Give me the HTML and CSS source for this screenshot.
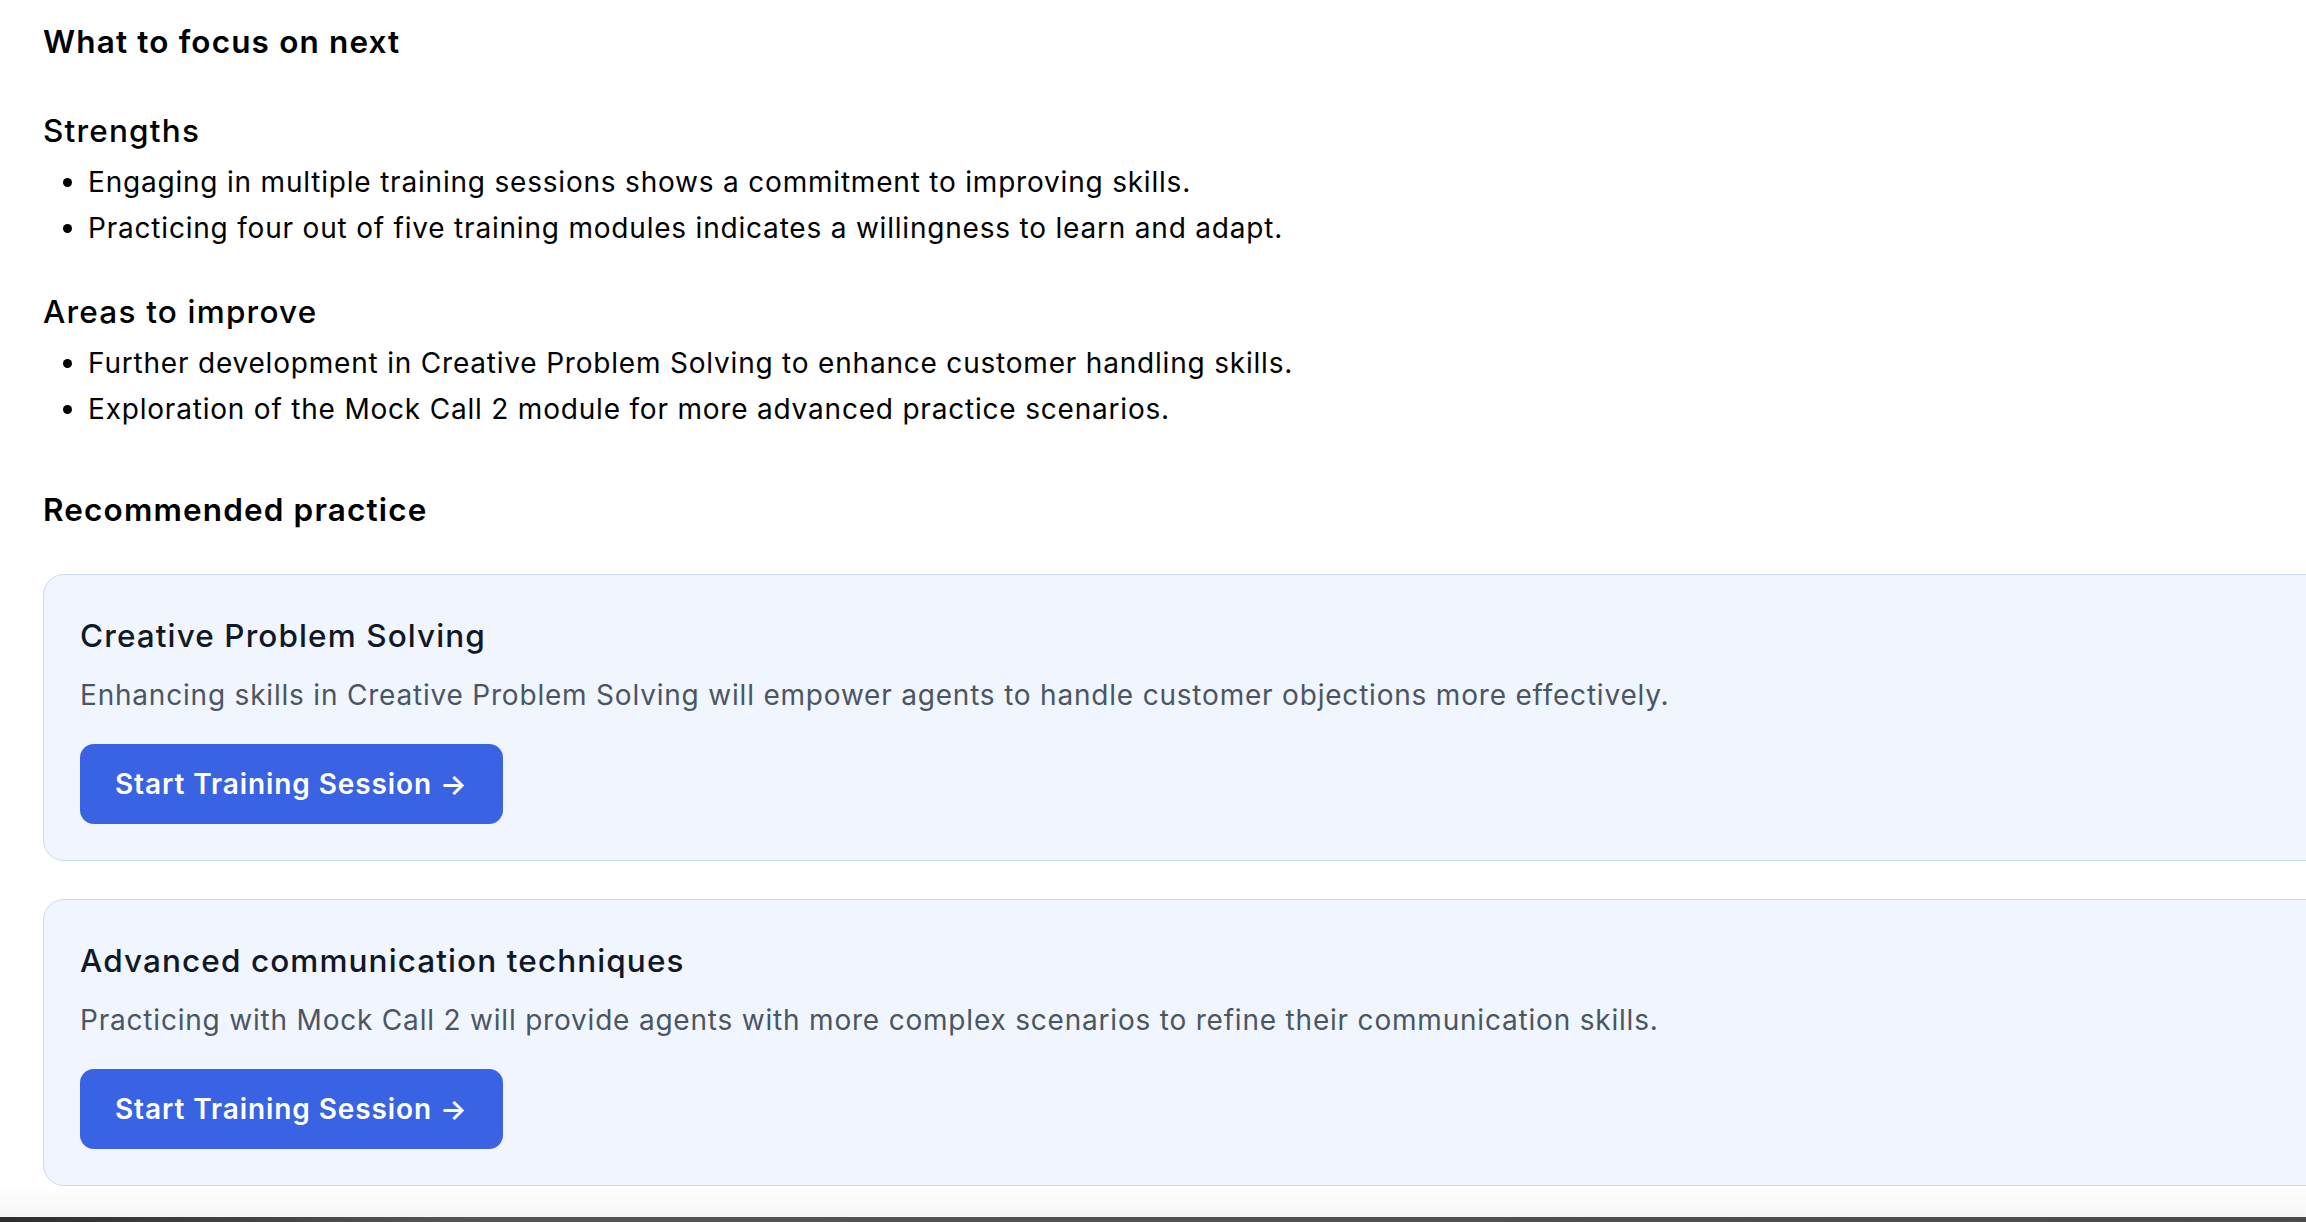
FILE: index.html
```html
<!DOCTYPE html>
<html lang="en">
<head>
    <meta charset="UTF-8" />
    <meta name="viewport" content="width=device-width, initial-scale=1.0" />
    <title>Training Summary</title>
    <link rel="stylesheet" href="styles.css">
</head>
<body>
    <main class="page">
        <!-- FOCUS AREAS -->
        <section class="focus">
            <h2 class="section-title">What to focus on next</h2>

            <div class="group">
                <h3>Strengths</h3>
                <ul>
                    <li>Engaging in multiple training sessions shows a commitment to improving skills.</li>
                    <li>Practicing four out of five training modules indicates a willingness to learn and adapt.</li>
                </ul>
            </div>

            <div class="group">
                <h3>Areas to improve</h3>
                <ul>
                    <li>Further development in Creative Problem Solving to enhance customer handling skills.</li>
                    <li>Exploration of the Mock Call 2 module for more advanced practice scenarios.</li>
                </ul>
            </div>
        </section>

        <!-- RECOMMENDED PRACTICE -->
        <section class="practice">
            <h2 class="section-title">Recommended practice</h2>

            <div class="card">
                <h4>Creative Problem Solving</h4>
                <p>Enhancing skills in Creative Problem Solving will empower agents to handle customer objections more effectively.</p>
                <button class="start-btn">Start Training Session &rarr;</button>
            </div>

            <div class="card">
                <h4>Advanced communication techniques</h4>
                <p>Practicing with Mock Call 2 will provide agents with more complex scenarios to refine their communication skills.</p>
                <button class="start-btn">Start Training Session &rarr;</button>
            </div>
        </section>
    </main>
    <div class="page-end"></div>
    <div class="window-edge"></div>
</body>
</html>
```

FILE: styles.css
```css
html, body {
    height: 100%;
    overflow: hidden;
}
body {
    margin: 0;
    font-family: Inter, 'Noto Sans', sans-serif;
    color: #000000;
    background-color: #FFFFFF;
    display: flex;
    flex-direction: column;
}

.page {
    padding: 17px 0 0 43px;
}

/* Headings shared by both sections */
.section-title {
    margin: 0;
    font-size: 31.5px;
    line-height: 49px;
    font-weight: 600;
    letter-spacing: 1.15px;
}
.focus .section-title {
    margin-bottom: 40px;
}

.group h3 {
    margin: 0 0 6px;
    font-size: 31.5px;
    line-height: 49px;
    font-weight: 500;
    letter-spacing: 1.2px;
}
.group + .group {
    margin-top: 38px;
}
.group ul {
    margin: 0;
    padding-left: 45px;
}
.group li {
    font-size: 28px;
    line-height: 42px;
    letter-spacing: 0.8px;
}
.group li + li {
    margin-top: 4px;
}

/* Recommended practice cards */
.practice {
    margin-top: 55px;
}
.practice .section-title {
    margin-bottom: 40px;
}
.card {
    margin-right: -80px; /* cards run past the right edge */
    padding: 36px;
    background-color: #F0F5FE;
    border: 1.75px solid #C9DCF7;
    border-radius: 21px;
}
.card + .card {
    margin-top: 38px;
}
.card h4 {
    margin: 0;
    font-size: 31.5px;
    line-height: 49px;
    font-weight: 500;
    letter-spacing: 1.1px;
    color: #111827;
}
.card p {
    margin: 14px 0 0;
    font-size: 28px;
    line-height: 42px;
    letter-spacing: 0.8px;
    color: #4B5563;
}
.start-btn {
    display: flex;
    align-items: center;
    height: 80px;
    margin-top: 28px;
    padding: 0 35px;
    background-color: #3963E3;
    color: #FFFFFF;
    border: none;
    border-radius: 14px;
    font-family: inherit;
    font-size: 28px;
    font-weight: 600;
    letter-spacing: 0.9px;
    cursor: pointer;
}
.start-btn:hover {
    background-color: #2F55CC;
}

/* bottom of the window */
.page-end {
    flex: 1;
    background: linear-gradient(#FFFFFF, #F7F7F7);
}
.window-edge {
    height: 5px;
    background: linear-gradient(90deg, #2E2E2E, #555555 20%, #4A4A4A);
}
```
